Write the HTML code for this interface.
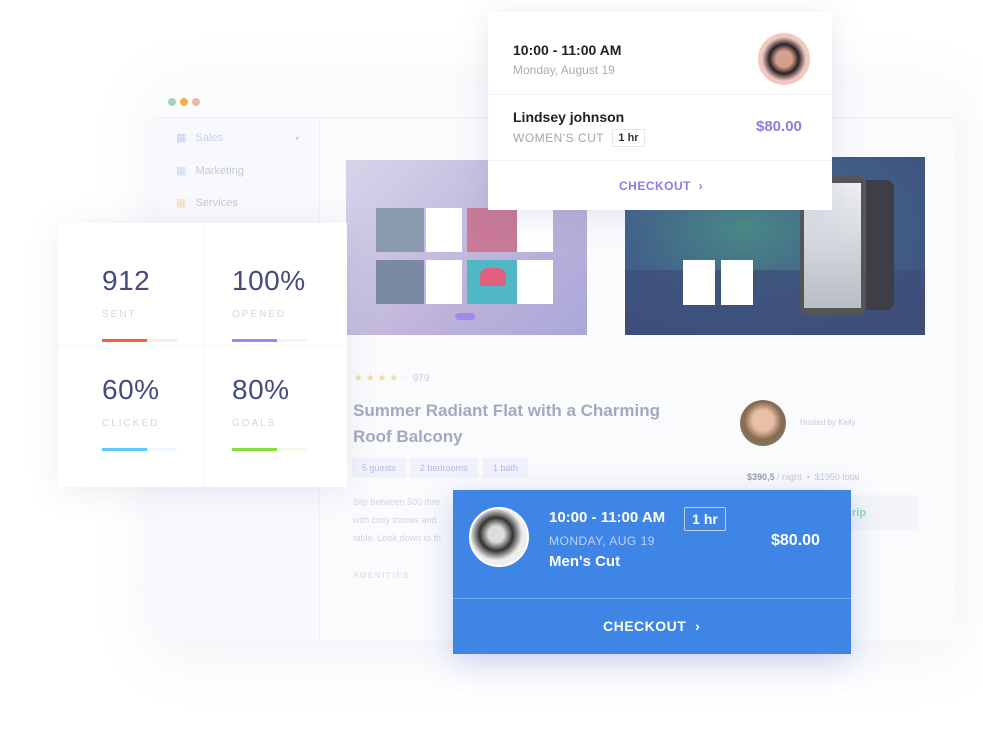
<!DOCTYPE html>
<html><head><meta charset="utf-8"><style>
*{margin:0;padding:0;box-sizing:border-box}
body{width:983px;height:750px;background:#fff;position:relative;overflow:hidden;font-family:"Liberation Sans",sans-serif}
.a{position:absolute}
.win{left:155px;top:85px;width:800px;height:555px;background:#fafbfd;box-shadow:0 10px 60px rgba(120,130,170,.12)}
.dot{width:8px;height:8px;border-radius:50%;top:98px}
.side{left:155px;top:118px;width:165px;height:522px;background:#f8f9fc;border-right:1px solid #f0f1f5}
.nav{font-size:11px;color:#c5c9d6}
.stats{left:58px;top:223px;width:289px;height:264px;background:#fff;box-shadow:0 4px 30px rgba(100,110,160,.12)}
.num{font-size:28px;color:#454b7e;letter-spacing:.5px}
.lab{font-size:10px;color:#d3d6e2;letter-spacing:2px}
.bar{height:3px;width:75px}
.card{background:#fff;box-shadow:0 6px 30px rgba(90,100,150,.15)}
.t1{font-size:14px;color:#222;font-weight:bold}
.blue{left:453px;top:490px;width:398px;height:164px;background:#3f85e6;color:#fff;box-shadow:0 8px 30px rgba(60,100,200,.25)}
.tag{height:20px;background:#f1f2fb;color:#b8b9ee;font-size:9px;line-height:20px;padding:0 10px;top:458px}
</style></head><body>
<div class="a win"></div>
<div class="a dot" style="left:168px;background:#a7d3bd"></div>
<div class="a dot" style="left:180px;background:#f2b04a"></div>
<div class="a dot" style="left:192px;background:#e8b9a5"></div>
<div class="a" style="left:155px;top:117px;width:800px;height:1px;background:#eef0f5"></div>
<div class="a side"></div>
<div class="a nav" style="left:176px;top:131px;color:#c9ccf3">▦&nbsp;&nbsp;&nbsp;Sales<span style="margin-left:72px;font-size:8px">▾</span></div>
<div class="a nav" style="left:176px;top:164px"><span style="color:#c6dcf3">▦</span>&nbsp;&nbsp;&nbsp;Marketing</div>
<div class="a nav" style="left:176px;top:196px"><span style="color:#f3ddb8">▦</span>&nbsp;&nbsp;&nbsp;Services</div>

<!-- purple image -->
<div class="a" style="left:346px;top:160px;width:241px;height:175px;background:linear-gradient(135deg,#d7d4ea,#bdb3da 60%,#a9a7d9)"></div>
<div class="a" style="left:376px;top:208px;width:48px;height:44px;background:#8a9bb0"></div>
<div class="a" style="left:426px;top:208px;width:36px;height:44px;background:#fff"></div>
<div class="a" style="left:467px;top:208px;width:50px;height:44px;background:#c97a98"></div>
<div class="a" style="left:517px;top:208px;width:36px;height:44px;background:#fff"></div>
<div class="a" style="left:376px;top:260px;width:48px;height:44px;background:#7a8aa5"></div>
<div class="a" style="left:426px;top:260px;width:36px;height:44px;background:#fff"></div>
<div class="a" style="left:467px;top:260px;width:50px;height:44px;background:#4fb8c4"></div>
<div class="a" style="left:480px;top:268px;width:26px;height:18px;background:#e06080;border-radius:8px 8px 2px 2px"></div>
<div class="a" style="left:517px;top:260px;width:36px;height:44px;background:#fff"></div>
<div class="a" style="left:455px;top:313px;width:20px;height:7px;background:#a08af0;border-radius:4px"></div>

<!-- right image -->
<div class="a" style="left:625px;top:157px;width:300px;height:178px;background:radial-gradient(ellipse at 40% 40%,#4a8a86,#415f8a 50%,#3d4f78)"></div>
<div class="a" style="left:625px;top:270px;width:300px;height:65px;background:#3d4d78;opacity:.7"></div>
<div class="a" style="left:683px;top:260px;width:32px;height:45px;background:#fff"></div>
<div class="a" style="left:721px;top:260px;width:32px;height:45px;background:#fff"></div>
<div class="a" style="left:800px;top:175px;width:65px;height:140px;background:#555;border-radius:8px"></div>
<div class="a" style="left:804px;top:183px;width:57px;height:125px;background:linear-gradient(#eef0f4,#b8bcc4)"></div>
<div class="a" style="left:866px;top:180px;width:28px;height:130px;background:#3e3e46;border-radius:0 8px 8px 0"></div>

<!-- listing -->
<div class="a" style="left:354px;top:373px;font-size:10px;color:#f1d9a0">★ ★ ★ ★ <span style="color:#eee">☆</span> <span style="color:#ccd">979</span></div>
<div class="a" style="left:353px;top:398px;font-size:17px;line-height:26px;font-weight:bold;color:#a5a9bf">Summer Radiant Flat with a Charming<br>Roof Balcony</div>
<div class="a tag" style="left:352px">5 guests</div>
<div class="a tag" style="left:410px">2 bedrooms</div>
<div class="a tag" style="left:483px">1 bath</div>
<div class="a" style="left:353px;top:493px;font-size:9px;line-height:18px;color:#d2d4de">Slip between 500 thre<br>with cosy throws and<br>table. Look down to th</div>
<div class="a" style="left:353px;top:571px;font-size:8px;letter-spacing:1.5px;color:#d8d9e2">AMENITIES</div>
<div class="a" style="left:740px;top:400px;width:46px;height:46px;border-radius:50%;background:radial-gradient(circle at 50% 45%,#e8c0a8 30%,#8a6a50 55%,#6c8a80)"></div>
<div class="a" style="left:800px;top:418px;font-size:8px;color:#c8cad6">Hosted by Kelly</div>
<div class="a" style="left:747px;top:472px;font-size:9px;color:#9a9cae"><b>$390,5</b> <span style="color:#c6c8d4">/ night &nbsp;•&nbsp; $1950 total</span></div>
<div class="a" style="left:830px;top:495px;width:88px;height:35px;background:#f3f5fa"></div>
<div class="a" style="left:852px;top:507px;font-size:11px;font-weight:bold;color:#8ee0a0">rip</div>

<!-- stats -->
<div class="a stats">
 <div class="a" style="left:146px;top:0;width:1px;height:264px;background:#f3f4f7"></div>
 <div class="a" style="left:0;top:122px;width:289px;height:1px;background:#f5f6f8"></div>
 <div class="a num" style="left:44px;top:42px">912</div>
 <div class="a lab" style="left:44px;top:86px">SENT</div>
 <div class="a bar" style="left:44px;top:116px;background:linear-gradient(90deg,#f4603e 60%,#fdecea 60%)"></div>
 <div class="a num" style="left:174px;top:42px">100%</div>
 <div class="a lab" style="left:174px;top:86px">OPENED</div>
 <div class="a bar" style="left:174px;top:116px;background:linear-gradient(90deg,#9c88f2 60%,#f3f2fb 60%)"></div>
 <div class="a num" style="left:44px;top:151px">60%</div>
 <div class="a lab" style="left:44px;top:195px">CLICKED</div>
 <div class="a bar" style="left:44px;top:225px;background:linear-gradient(90deg,#5ec8f6 60%,#eef8fe 60%)"></div>
 <div class="a num" style="left:174px;top:151px">80%</div>
 <div class="a lab" style="left:174px;top:195px">GOALS</div>
 <div class="a bar" style="left:174px;top:225px;background:linear-gradient(90deg,#86e03a 60%,#f2fbe9 60%)"></div>
</div>

<!-- top card -->
<div class="a card" style="left:488px;top:12px;width:344px;height:198px">
 <div class="a t1" style="left:25px;top:30px">10:00 - 11:00 AM</div>
 <div class="a" style="left:25px;top:51px;font-size:12px;color:#a9abb6">Monday, August 19</div>
 <div class="a" style="left:270px;top:21px;width:52px;height:52px;border-radius:50%;background:radial-gradient(circle at 50% 50%,#d6a08c 22%,#2a2226 40%,#f2c8c0 60%)"></div>
 <div class="a" style="left:0;top:82px;width:344px;height:1px;background:#eef0f4"></div>
 <div class="a t1" style="left:25px;top:97px">Lindsey johnson</div>
 <div class="a" style="left:25px;top:119px;font-size:12px;color:#a3a5b0;letter-spacing:.5px">WOMEN'S CUT</div>
 <div class="a" style="left:124px;top:117px;width:33px;height:18px;border:1px solid #e4e6ee;border-radius:2px;font-size:11px;font-weight:bold;color:#333;text-align:center;line-height:16px">1 hr</div>
 <div class="a" style="left:268px;top:106px;font-size:15px;font-weight:bold;color:#8f7ae6">$80.00</div>
 <div class="a" style="left:0;top:148px;width:344px;height:1px;background:#f1f2f6"></div>
 <div class="a" style="left:131px;top:167px;font-size:12px;font-weight:bold;color:#8f7ae6;letter-spacing:.5px">CHECKOUT &nbsp;›</div>
</div>

<!-- blue card -->
<div class="a blue">
 <div class="a" style="left:16px;top:17px;width:60px;height:60px;border-radius:50%;background:radial-gradient(circle at 45% 45%,#ddd 18%,#333 38%,#eee 60%);border:2px solid #fff"></div>
 <div class="a" style="left:96px;top:19px;font-size:15px;font-weight:bold">10:00 - 11:00 AM</div>
 <div class="a" style="left:231px;top:17px;width:42px;height:24px;border:1px solid #b8d0f6;border-radius:2px;font-size:14px;font-weight:bold;text-align:center;line-height:22px">1 hr</div>
 <div class="a" style="left:96px;top:44px;font-size:12px;color:#bcd2f6;letter-spacing:.5px">MONDAY, AUG 19</div>
 <div class="a" style="left:96px;top:63px;font-size:15px;font-weight:bold">Men's Cut</div>
 <div class="a" style="left:318px;top:42px;font-size:16px;font-weight:bold">$80.00</div>
 <div class="a" style="left:0;top:108px;width:398px;height:1px;background:#6ea4ee"></div>
 <div class="a" style="left:150px;top:128px;font-size:14px;font-weight:bold;letter-spacing:.5px">CHECKOUT &nbsp;›</div>
</div>
</body></html>
